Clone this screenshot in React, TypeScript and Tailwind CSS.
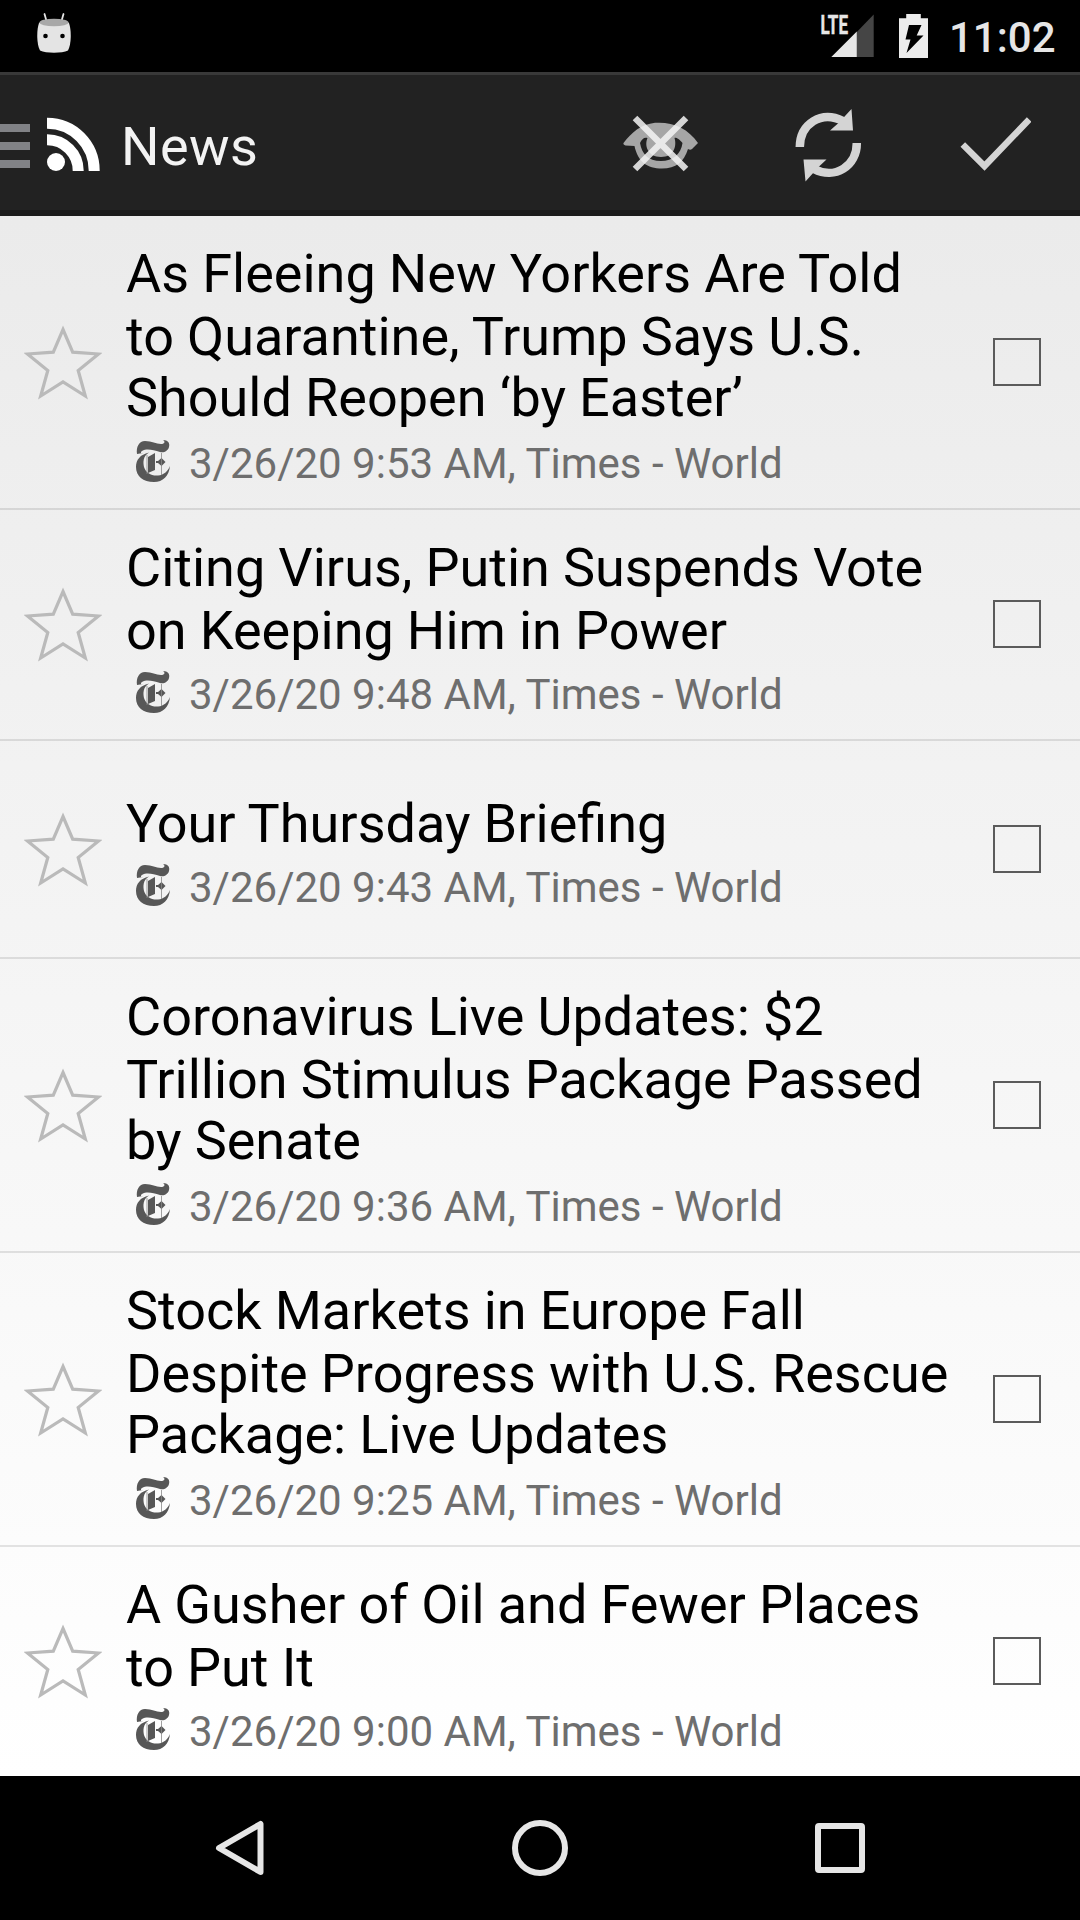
import React from "react";

type Article = { lines: string[]; time: string; height: string };

const articles: Article[] = [
  { lines: ["As Fleeing New Yorkers Are Told", "to Quarantine, Trump Says U.S.", "Should Reopen ‘by Easter’"], time: "9:53", height: "h-[294px]" },
  { lines: ["Citing Virus, Putin Suspends Vote", "on Keeping Him in Power"], time: "9:48", height: "h-[231px]" },
  { lines: ["Your Thursday Briefing"], time: "9:43", height: "h-[218px]" },
  { lines: ["Coronavirus Live Updates: $2", "Trillion Stimulus Package Passed", "by Senate"], time: "9:36", height: "h-[294px]" },
  { lines: ["Stock Markets in Europe Fall", "Despite Progress with U.S. Rescue", "Package: Live Updates"], time: "9:25", height: "h-[294px]" },
  { lines: ["A Gusher of Oil and Fewer Places", "to Put It"], time: "9:00", height: "h-[231px]" },
];

function StatusBar() {
  return (
    <div className="flex h-[72px] shrink-0 items-start bg-black">
      <svg className="ml-9 mt-3 h-[42px] w-9" viewBox="0 0 36 42">
        <path d="M8.500 2L10.500 9M27.500 2L25.500 9" stroke="#e4e4e4" strokeWidth="1.8" strokeLinecap="round" />
        <path d="M3 11C8 7 28 7 33 11C35.500 18 35.500 32 32 38.500C26 41.500 10 41.500 4 38.500C.5 32 .5 18 3 11Z" fill="#e4e4e4" />
        <ellipse cx="18" cy="10.500" rx="14.500" ry="3.800" fill="#a8a8a8" />
        <circle cx="9.500" cy="24" r="2.300" fill="#000" />
        <circle cx="26.500" cy="24" r="2.300" fill="#000" />
      </svg>
      <div className="ml-auto flex">
        <svg className="h-[60px] w-[54px]" viewBox="0 -12 54 60">
          <path d="M53.700 2.500V45H36.800V20Z" fill="#454545" />
          <path d="M36.800 19.500V45H11.300Z" fill="#e6e6e6" />
          <text x="0.5" y="21.5" textLength="27.5" lengthAdjust="spacingAndGlyphs" className="text-[26px] font-bold" fill="#e6e6e6" stroke="#e6e6e6" strokeWidth="0.4">LTE</text>
        </svg>
        <svg className="ml-[25px] mt-[14px] h-11 w-[29px]" viewBox="0 0 29 44">
          <path d="M7.200 0H21.800V4.300H29V44H0V4.300H7.200Z" fill="#ececec" />
          <path d="M10 11H22.500L17.700 21.500H24.500L7.500 39L11.500 25.500H6.500Z" fill="#000" />
        </svg>
        <span className="ml-[21px] mr-[23px] mt-[14px] w-[108px] whitespace-nowrap text-[42px] font-medium leading-[48px] text-[#e6e6e6]">11:02</span>
      </div>
    </div>
  );
}

function Toolbar() {
  return (
    <header className="flex h-36 shrink-0 items-start border-b-[6px] border-t-[3px] border-b-[#1b1b1b] border-t-[#393939] bg-[#222222]">
      <svg className="mt-[49px] h-11 w-[30px]" viewBox="0 0 30 44">
        <path d="M0 0H30V8H0ZM0 18H30V26H0ZM0 36H30V44H0Z" fill="#818286" />
      </svg>
      <svg className="ml-[17px] mt-[42px] h-[54px] w-[53px]" viewBox="0 0 53 54">
        <circle cx="9" cy="45" r="9" fill="#fff" />
        <path d="M0 6.200A47 47.500 0 0 1 47.200 54M0 22.700A31 31 0 0 1 31.200 54" fill="none" stroke="#fff" strokeWidth="11" />
      </svg>
      <h1 className="ml-[21px] mt-[40px] text-[54px] font-normal leading-[64px] tracking-[0.4px] text-[#f3f3f3]">News</h1>
      <svg className="ml-auto mt-[40px] h-[60px] w-[78px]" viewBox="0 0 78 60">
        <path fill="#a6a6a6" fillRule="evenodd" d="M1.500 28C10 17 19 9.500 33 7.800C50 6.500 66 13 76 28L70 34C68.500 35.500 67 34.500 66 34C62 47 54 53.500 40 53.500C25 53.500 16 47 12.500 31L3.500 30.500C2 30 1 29 1.500 28ZM18 28C20 39 26 46 39 46C51 46 59 39 60.500 28C57 23 53 22 52.500 23C55 31 52 42 39 42C26 42 22 31 25.500 23C22 22 20 24 18 28Z" />
        <path d="M13 3L64 54M64 3L13 54" stroke="#f4f4f4" strokeOpacity=".85" strokeWidth="6.500" />
      </svg>
      <svg className="ml-[95px] mt-[34px] h-[74px] w-[68px]" viewBox="0 0 68 74" fill="#d4d4d4">
        <path d="M4.800 38C5 15 26 1 48 12" fill="none" stroke="#d4d4d4" strokeWidth="8.500" />
        <path d="M56.500 0L58 21.500H35L43.500 14Z" />
        <path d="M61.800 34C62 57 40 71 19 60" fill="none" stroke="#d4d4d4" strokeWidth="8.500" />
        <path d="M10.500 72.500L8.500 50.500H31.500L23.500 58Z" />
      </svg>
      <svg className="ml-[97px] mr-[49px] mt-[41px] h-[56px] w-[71px]" viewBox="0 0 71 56">
        <path d="M2.800 28.500L24.500 50L69.200 3.500" fill="none" stroke="#d4d4d4" strokeWidth="6.500" />
      </svg>
    </header>
  );
}

function TimesIcon() {
  return (
    <svg className="mt-[9px] h-[42px] w-[34px] shrink-0" viewBox="0 0 34 42" fill="#575757">
      <path d="M1 14C0 7 3 1 9 1C16 1 20 4 25 4C28 4 30 2 27 0C32 0 34 3 33 7C32 11 28 13 24 12C17 10 11 8 6 11C4 12 5 14 7 13Z" />
      <path d="M13 12.500C7 16 7 22 8 27C10 33 15 36 22 35.500C28 35 32 31 34 26C33 36 27 42 18 42C7 42 0 36 0 27C0 20 4 14.500 13 12.500Z" />
      <path d="M12 17L19 13V30L12 33ZM20 21L22 21L25.500 18L29.500 22L25.500 26L22 23L20 23Z" />
      <path d="M11 15V34M25.500 13V35" stroke="#888" strokeWidth=".8" />
    </svg>
  );
}

function ArticleRow({ article }: { article: Article }) {
  const nudge = article.lines.length === 2 ? "mb-px" : "";
  return (
    <li className={`flex shrink-0 items-center border-b-2 border-black/10 ${article.height}`}>
      <svg className={`ml-6 h-[76px] w-[78px] shrink-0 ${nudge}`} viewBox="0 0 78 76">
        <path d="M39 5.500L48.700 28.200L74.500 30L54.200 46.500L61.300 72L39 58L16.700 72L23.800 46.500L3.500 30L29.300 28.200Z" fill="none" stroke="#bababa" strokeWidth="3.200" />
      </svg>
      <div className="ml-6 min-w-0 flex-1 pt-1.5">
        <h2 className="text-[54px] font-normal text-black [word-spacing:-0.3px]">
          {article.lines.map((line, i) => (
            <span key={line} className={`block whitespace-nowrap ${i === 2 ? "pb-1 leading-[59px]" : "leading-[63px]"}`}>{line}</span>
          ))}
        </h2>
        <div className="flex h-[57px] items-start pl-[10px] text-[42px] leading-[49px] text-[#6e6e6e]">
          <TimesIcon />
          <span className="ml-[19px] mt-2 whitespace-nowrap">3/26/20 {article.time} AM, Times - World</span>
        </div>
      </div>
      <span role="checkbox" aria-checked="false" className={`mr-[39px] size-12 shrink-0 border-2 border-[#5b5b5b] ${nudge}`} />
    </li>
  );
}

export default function App() {
  return (
    <div className="flex h-[1920px] w-[1080px] flex-col overflow-hidden bg-black font-[Roboto,sans-serif]">
      <StatusBar />
      <Toolbar />
      <ul className="flex min-h-0 flex-1 flex-col overflow-hidden bg-linear-to-b from-[#ebebeb] to-white">
        {articles.map((article) => <ArticleRow key={article.time} article={article} />)}
      </ul>
      <nav className="flex h-36 shrink-0 items-center justify-center gap-[244px] bg-black">
        <svg className="size-14" viewBox="0 0 56 56"><path d="M48.500 4V52L7 28Z" fill="none" stroke="#e6e6e6" strokeWidth="6" strokeLinejoin="round" /></svg>
        <svg className="size-14" viewBox="0 0 56 56"><circle cx="28" cy="28" r="25" fill="none" stroke="#e6e6e6" strokeWidth="6" /></svg>
        <svg className="size-14" viewBox="0 0 56 56"><rect x="6" y="6" width="44" height="44" rx="1" fill="none" stroke="#e6e6e6" strokeWidth="6" /></svg>
      </nav>
    </div>
  );
}
